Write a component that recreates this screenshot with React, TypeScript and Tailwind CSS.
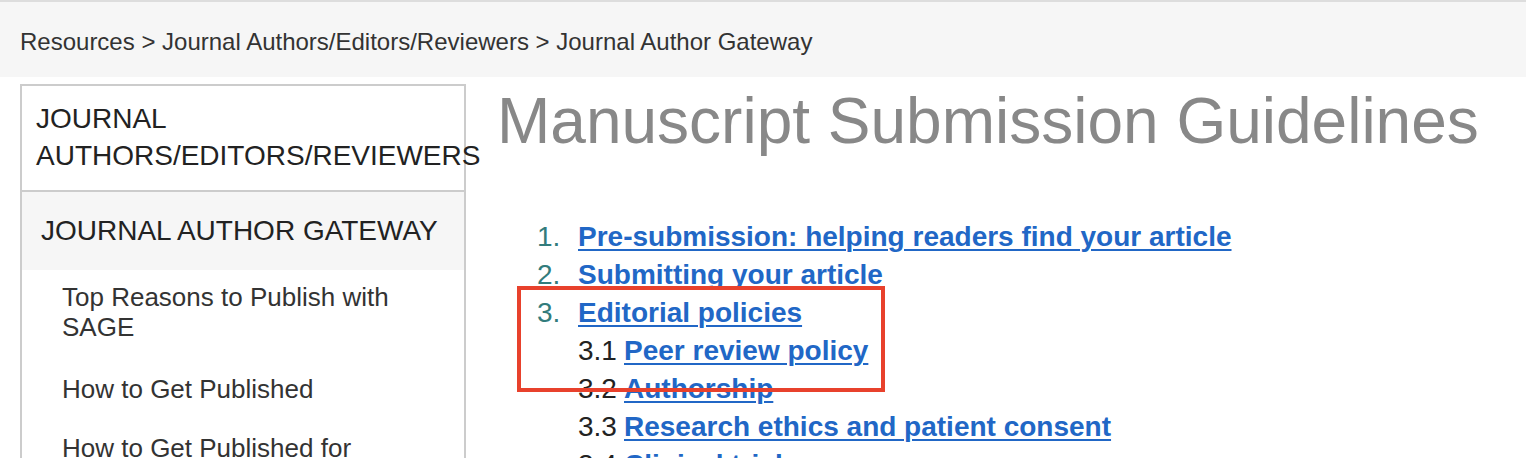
import React from "react";

const font = { fontFamily: '"Liberation Sans", Arial, sans-serif' };

function Link({ children }: { children: React.ReactNode }) {
  return (
    <a href="#" className="font-bold text-[#2167c6] underline decoration-[2px] underline-offset-[3px]">
      {children}
    </a>
  );
}

export default function App() {
  const top = [
    "Pre-submission: helping readers find your article",
    "Submitting your article",
    "Editorial policies",
  ];
  const subs = [
    ["3.1", "Peer review policy"],
    ["3.2", "Authorship"],
    ["3.3", "Research ethics and patient consent"],
    ["3.4", "Clinical trials"],
  ];
  return (
    <div className="w-[1526px] h-[458px] overflow-hidden bg-white" style={font}>
      <div className="border-t-2 border-[#dddddd] bg-[#f6f6f6] h-[77px] flex items-center pl-[20px] pt-[4px] text-[24px] text-[#333333]">
        Resources &gt; Journal Authors/Editors/Reviewers &gt; Journal Author Gateway
      </div>
      <div className="flex pl-[20px] pt-[7px] gap-[30px]">
        <div className="w-[446px] shrink-0 border-2 border-[#cccccc]">
          <div className="pl-[14px] pt-[14px] pb-[16px] text-[28px] leading-[37px] text-[#222222] whitespace-nowrap border-b-2 border-[#cccccc]">
            JOURNAL
            <br />
            AUTHORS/EDITORS/REVIEWERS
          </div>
          <div className="bg-[#f6f6f6] h-[78px] flex items-center pl-[19px] text-[28px] text-[#222222]">
            JOURNAL AUTHOR GATEWAY
          </div>
          <div className="pl-[40px] pr-[30px] text-[26px] leading-[30px] text-[#333333]">
            <div className="pt-[12px] pb-[17px]">
              Top Reasons to Publish with
              <br />
              SAGE
            </div>
            <div className="py-[15px]">How to Get Published</div>
            <div className="py-[14px]">How to Get Published for Students</div>
          </div>
        </div>
        <div className="flex-1">
          <h1 className="text-[64px] leading-[74px] text-[#888888] ml-[1px]">
            Manuscript Submission Guidelines
          </h1>
          <div className="relative mt-[60px] text-[28px] leading-[38px]">
            <ol className="pl-[41px]">
              {top.map((t, i) => (
                <li key={t} className="flex">
                  <span className="w-[41px] text-[#327c7c]">{i + 1}.</span>
                  <Link>{t}</Link>
                </li>
              ))}
            </ol>
            <div className="pl-[82px] text-[#222222]">
              {subs.map(([n, t]) => (
                <div key={n} className="flex">
                  <span className="w-[46px]">{n}</span>
                  <Link>{t}</Link>
                </div>
              ))}
            </div>
            <div className="absolute left-[21px] top-[68px] w-[368px] h-[106px] border-[4px] border-[#e8412c]" />
          </div>
        </div>
      </div>
    </div>
  );
}
